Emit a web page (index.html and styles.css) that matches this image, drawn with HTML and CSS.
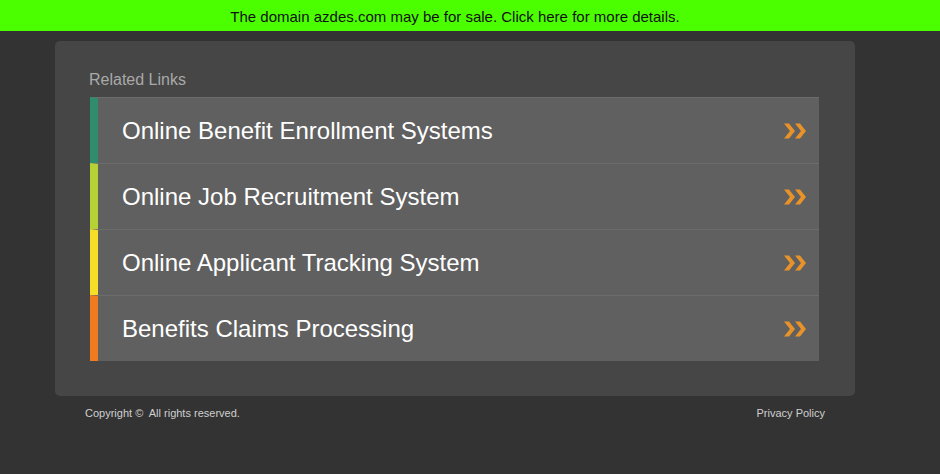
FILE: index.html
```html
<!DOCTYPE html>
<html>
<head>
<meta charset="utf-8">
<link rel="stylesheet" href="styles.css">
</head>
<body>
<div class="topbar">The domain azdes.com may be for sale. Click here for more details.</div>
<div class="wrap">
  <div class="box">
    <div class="title">Related Links</div>
    <ul class="links">
      <li class="c1"><span>Online Benefit Enrollment Systems</span><svg class="chev" viewBox="0 0 24 18"><path d="M1 1.5 L7 9 L1 16.5 H6 L12 9 L6 1.5 Z M12 1.5 L18 9 L12 16.5 H17 L23 9 L17 1.5 Z"/></svg></li>
      <li class="c2"><span>Online Job Recruitment System</span><svg class="chev" viewBox="0 0 24 18"><path d="M1 1.5 L7 9 L1 16.5 H6 L12 9 L6 1.5 Z M12 1.5 L18 9 L12 16.5 H17 L23 9 L17 1.5 Z"/></svg></li>
      <li class="c3"><span>Online Applicant Tracking System</span><svg class="chev" viewBox="0 0 24 18"><path d="M1 1.5 L7 9 L1 16.5 H6 L12 9 L6 1.5 Z M12 1.5 L18 9 L12 16.5 H17 L23 9 L17 1.5 Z"/></svg></li>
      <li class="c4"><span>Benefits Claims Processing</span><svg class="chev" viewBox="0 0 24 18"><path d="M1 1.5 L7 9 L1 16.5 H6 L12 9 L6 1.5 Z M12 1.5 L18 9 L12 16.5 H17 L23 9 L17 1.5 Z"/></svg></li>
    </ul>
  </div>
  <div class="footer">
    <span>Copyright ©&nbsp; All rights reserved.</span>
    <span>Privacy Policy</span>
  </div>
</div>
</body>
</html>
```

FILE: styles.css
```css
html, body {
  margin: 0;
  padding: 0;
  background: #333333;
  font-family: "Liberation Sans", Arial, sans-serif;
}
.topbar {
  height: 31px;
  background: #4cff00;
  color: #111;
  font-size: 15px;
  line-height: 33px;
  text-align: center;
  padding-right: 30px;
}
.wrap {
  width: 800px;
  margin: 10px 0 0 55px;
}
.box {
  background: #464646;
  border-radius: 5px;
  padding: 30px 36px 35px 35px;
}
.title {
  color: #a9a9a9;
  font-size: 16px;
  line-height: 18px;
  margin: 0 0 8px -1px;
}
.links {
  list-style: none;
  margin: 0;
  padding: 0;
}
.links li {
  height: 65px;
  border-top: 1px solid #6c6c6c;
  border-left: 8px solid #2e8b6a;
  background: #606060;
  display: flex;
  align-items: center;
  justify-content: space-between;
  padding: 0 12px 0 24px;
  color: #ffffff;
  font-size: 24px;
}
.links li.c1 { border-left-color: #2f8c6c; }
.links li.c2 { border-left-color: #b6d135; }
.links li.c3 { border-left-color: #f6dd28; }
.links li.c4 { border-left-color: #ef7a1f; }
.chev {
  width: 24px;
  height: 18px;
  fill: #e8922a;
}
.footer {
  display: flex;
  justify-content: space-between;
  padding: 11px 30px 0;
  color: #cfcfcf;
  font-size: 11px;
}
```
